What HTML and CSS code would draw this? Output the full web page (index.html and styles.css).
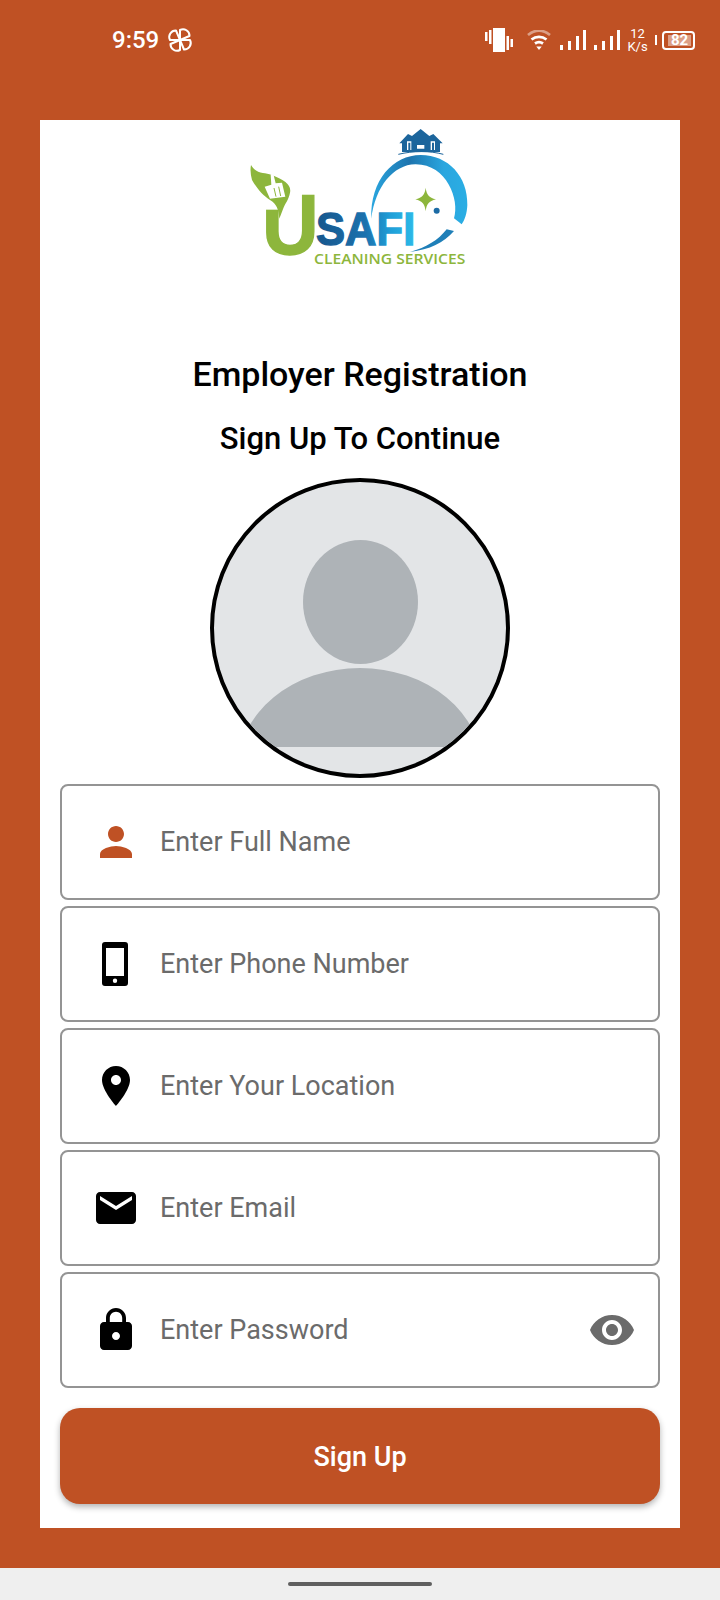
FILE: index.html
```html
<!DOCTYPE html>
<html lang="en">
<head>
  <meta charset="UTF-8">
  <title>Employer Registration</title>
  <link rel="stylesheet" href="styles.css">
</head>
<body>
  <div class="status-bar">
    <div class="status-left">
      <span class="time">9:59</span>
      <svg class="pinwheel" viewBox="-14 -14 28 28" fill="none" stroke="#fff" stroke-width="2" stroke-linejoin="round">
        <path d="M0 0V-10A6.500 6.500 0 0 1 9.500-4Z"/>
        <path d="M0 0V-10A6.500 6.500 0 0 1 9.500-4Z" transform="rotate(90)"/>
        <path d="M0 0V-10A6.500 6.500 0 0 1 9.500-4Z" transform="rotate(180)"/>
        <path d="M0 0V-10A6.500 6.500 0 0 1 9.500-4Z" transform="rotate(270)"/>
      </svg>
    </div>
    <div class="status-right">
      <svg class="st-vibrate" viewBox="0 0 28 24" fill="#fff">
        <rect x="8" y="0" width="12" height="24"/>
        <rect x="0" y="4" width="2.500" height="9"/>
        <rect x="4" y="2" width="2.500" height="14"/>
        <rect x="21.500" y="8" width="2.500" height="14"/>
        <rect x="25.500" y="11" width="2.500" height="8"/>
      </svg>
      <svg class="st-wifi" viewBox="0 0 24 20" fill="none" stroke="#fff" stroke-width="2.800">
        <path d="M1 5C8-.5 16-.5 23 5" opacity=".45"/>
        <path d="M4.500 9.500C9 6 15 6 19.500 9.500"/>
        <path d="M8 13.500C10.500 11.800 13.500 11.800 16 13.500"/>
        <path d="M9.300 16.500H14.700L12 20Z" fill="#fff" stroke="none"/>
      </svg>
      <svg class="st-signal" viewBox="0 0 26 20" fill="#fff">
        <rect x="0" y="15" width="3" height="5"/>
        <rect x="8" y="11" width="3" height="9"/>
        <rect x="16" y="6" width="3" height="14"/>
        <rect x="23" y="0" width="3" height="20"/>
      </svg>
      <svg class="st-signal" viewBox="0 0 26 20" fill="#fff">
        <rect x="0" y="15" width="3" height="5"/>
        <rect x="8" y="11" width="3" height="9"/>
        <rect x="16" y="6" width="3" height="14"/>
        <rect x="23" y="0" width="3" height="20"/>
      </svg>
      <div class="speed"><span>12</span><span>K/s</span></div>
      <div class="battery">
        <span class="battery-nub"></span>
        <span class="battery-body"><span class="battery-level">82</span></span>
      </div>
    </div>
  </div>

  <main class="card">
    <svg class="logo" viewBox="0 0 780 480">
      <defs>
        <linearGradient id="safi" x1="0" x2="1" y1="0" y2="0">
          <stop offset="0" stop-color="#17568c"/>
          <stop offset=".5" stop-color="#1b72ae"/>
          <stop offset=".75" stop-color="#1f9fd8"/>
          <stop offset="1" stop-color="#2cbbe9"/>
        </linearGradient>
        <linearGradient id="ring" x1="0" x2="1" y1="0" y2="0">
          <stop offset="0" stop-color="#2aa6df"/>
          <stop offset=".4" stop-color="#1d74ae"/>
          <stop offset=".75" stop-color="#2aa6df"/>
          <stop offset="1" stop-color="#2aaee4"/>
        </linearGradient>
      </defs>
      <text class="logo-u" x="96" y="402" textLength="170" lengthAdjust="spacingAndGlyphs">U</text>
      <rect x="100" y="215" width="66" height="54" fill="#fff"/>
      <path d="M63 135C80 165 105 155 125 165C165 180 185 195 180 218C176 240 165 250 158 270L148 296C146 268 140 252 120 240C100 228 80 205 66 180C62 165 60 150 63 135Z" fill="#8db63c"/>
      <path d="M130 162L137 190L156 188L166 230L120 236L104 200L124 194L122 164Z" fill="#fff"/>
      <path d="M132 204L138 230M146 200L152 228" stroke="#8db63c" stroke-width="3"/>
      <text class="logo-safi" x="258" y="375" textLength="298" lengthAdjust="spacingAndGlyphs" fill="url(#safi)" stroke="url(#safi)">SAFI</text>
      <path d="M424 296C420 180 490 105 572 105C655 105 714 170 712 255C711 280 704 300 695 313L672 295C690 240 650 132 556 133C490 134 436 200 424 296Z" fill="url(#ring)"/>
      <path d="M672 333C640 370 600 388 540 396C590 382 625 360 650 328Z" fill="#1f7fb8"/>
      <path d="M572 27L598 48L610 42L638 70H630V96H516V70H508L534 42L546 48Z" fill="#1c659c"/>
      <path d="M505 103C550 92 600 92 640 103" fill="none" stroke="#1c659c" stroke-width="3"/>
      <path d="M531 64H544V90H531ZM561 75H583V86H561ZM602 64H615V90H602Z" fill="#fff"/>
      <path d="M535 68H541V90H535ZM606 68H612V90H606Z" fill="#1c659c"/>
      <path d="M587 203C590 224 596 232 618 238C596 244 590 252 587 274C584 252 578 244 556 238C578 232 584 224 587 203Z" fill="#8db63c"/>
      <circle cx="620" cy="272" r="9" fill="#1c6ba5"/>
      <text class="logo-sub" x="252" y="432" textLength="454" lengthAdjust="spacingAndGlyphs">CLEANING SERVICES</text>
    </svg>

    <h1 class="title">Employer Registration</h1>
    <h2 class="subtitle">Sign Up To Continue</h2>

    <svg class="avatar" viewBox="0 0 300 300">
      <defs>
        <clipPath id="avatar-clip"><circle cx="150" cy="150" r="146"/></clipPath>
      </defs>
      <circle cx="150" cy="150" r="148" fill="#e3e5e7" stroke="#000" stroke-width="4"/>
      <ellipse cx="150.500" cy="124" rx="57.500" ry="62" fill="#aeb3b7"/>
      <g clip-path="url(#avatar-clip)">
        <path d="M28 269V290A122 100 0 0 1 272 290V269Z" fill="#aeb3b7"/>
      </g>
    </svg>

    <form class="fields">
      <div class="field">
        <svg class="icon icon-accent" viewBox="0 0 24 24"><path d="M12 12c2.210 0 4-1.790 4-4s-1.790-4-4-4-4 1.790-4 4 1.790 4 4 4zm0 2c-2.670 0-8 1.340-8 4v2h16v-2c0-2.660-5.330-4-8-4z"/></svg>
        <span class="placeholder">Enter Full Name</span>
      </div>
      <div class="field">
        <svg class="icon" viewBox="0 0 24 24"><path fill-rule="evenodd" d="M6.500 1h10A1.500 1.500 0 0 1 18 2.500v19a1.500 1.500 0 0 1-1.500 1.500h-10A1.500 1.500 0 0 1 5 21.500v-19A1.500 1.500 0 0 1 6.500 1zM7 4v14h9V4zm4.500 15.300a1.100 1.100 0 1 0 0 2.200 1.100 1.100 0 0 0 0-2.200z"/></svg>
        <span class="placeholder">Enter Phone Number</span>
      </div>
      <div class="field">
        <svg class="icon" viewBox="0 0 24 24"><path d="M12 2C8.130 2 5 5.130 5 9c0 5.250 7 13 7 13s7-7.750 7-13c0-3.870-3.130-7-7-7zm0 9.500c-1.380 0-2.500-1.120-2.500-2.500s1.120-2.500 2.500-2.500 2.500 1.120 2.500 2.500-1.120 2.500-2.500 2.500z"/></svg>
        <span class="placeholder">Enter Your Location</span>
      </div>
      <div class="field">
        <svg class="icon" viewBox="0 0 24 24"><path d="M20 4H4c-1.100 0-1.990.9-1.990 2L2 18c0 1.100.9 2 2 2h16c1.100 0 2-.9 2-2V6c0-1.100-.9-2-2-2zm0 4l-8 5-8-5V6l8 5 8-5v2z"/></svg>
        <span class="placeholder">Enter Email</span>
      </div>
      <div class="field">
        <svg class="icon" viewBox="0 0 24 24"><path d="M18 8h-1V6c0-2.760-2.240-5-5-5S7 3.240 7 6v2H6c-1.100 0-2 .9-2 2v10c0 1.100.9 2 2 2h12c1.100 0 2-.9 2-2V10c0-1.100-.9-2-2-2zm-6 9c-1.100 0-2-.9-2-2s.9-2 2-2 2 .9 2 2-.9 2-2 2zm3.100-9H8.900V6c0-1.710 1.390-3.100 3.100-3.100 1.710 0 3.100 1.390 3.100 3.100v2z"/></svg>
        <span class="placeholder">Enter Password</span>
        <svg class="icon icon-eye" viewBox="0 0 24 24"><path d="M12 4.500C7 4.500 2.730 7.610 1 12c1.730 4.390 6 7.500 11 7.500s9.270-3.110 11-7.500c-1.730-4.390-6-7.500-11-7.500zM12 17c-2.760 0-5-2.240-5-5s2.240-5 5-5 5 2.240 5 5-2.240 5-5 5zm0-8c-1.660 0-3 1.340-3 3s1.340 3 3 3 3-1.340 3-3-1.340-3-3-3z"/></svg>
      </div>
      <button class="signup" type="button">Sign Up</button>
    </form>
  </main>

  <div class="nav-bar"><span class="nav-pill"></span></div>
</body>
</html>
```

FILE: styles.css
```css
* {
  box-sizing: border-box;
}
body {
  margin: 0;
  width: 720px;
  height: 1600px;
  background-color: #bf5124;
  font-family: Roboto, sans-serif;
  display: flex;
  flex-direction: column;
}
.status-bar {
  height: 80px;
  padding: 0 25px 0 112px;
  display: flex;
  align-items: center;
  justify-content: space-between;
  color: #fff;
}
.status-left {
  display: flex;
  align-items: center;
  gap: 7px;
}
.time {
  font-size: 24px;
  font-weight: 500;
}
.pinwheel {
  width: 28px;
  height: 28px;
}
.status-right {
  display: flex;
  align-items: center;
}
.st-vibrate {
  width: 28px;
  height: 24px;
  margin-right: 14px;
}
.st-wifi {
  width: 24px;
  height: 20px;
  margin-right: 9px;
}
.st-signal {
  width: 26px;
  height: 20px;
  margin-right: 8px;
}
.speed {
  width: 21px;
  margin: 0 7px 0 -1px;
  display: flex;
  flex-direction: column;
  align-items: center;
  font-size: 13px;
  line-height: 13px;
}
.battery {
  display: flex;
  align-items: center;
  gap: 5px;
}
.battery-nub {
  width: 2px;
  height: 10px;
  background-color: #fff;
}
.battery-body {
  width: 33px;
  height: 19px;
  border: 2px solid #fff;
  border-radius: 4px;
  padding: 2px;
  display: flex;
}
.battery-level {
  width: 24px;
  margin-left: 2px;
  background-color: rgba(255, 255, 255, 0.45);
  color: #fff;
  font-size: 15px;
  font-weight: 700;
  line-height: 11px;
  text-align: center;
}
.card {
  margin: 40px 40px 0;
  height: 1408px;
  padding: 0 20px;
  background-color: #fff;
  display: flex;
  flex-direction: column;
  align-items: center;
}
.logo {
  width: 260px;
  height: 160px;
  flex-shrink: 0;
}
.logo-u {
  font-family: "Liberation Sans", sans-serif;
  font-size: 255px;
  font-weight: 700;
  fill: #8db63c;
  stroke: #8db63c;
  stroke-width: 4px;
}
.logo-safi {
  font-family: "Liberation Sans", sans-serif;
  font-size: 139px;
  font-weight: 700;
  stroke-width: 4px;
}
.logo-sub {
  font-family: "Open Sans", sans-serif;
  font-size: 42px;
  font-weight: 600;
  fill: #8db63c;
}
.title {
  margin: 74px 0 0;
  font-size: 34px;
  line-height: 40px;
  font-weight: 500;
  color: #000;
}
.subtitle {
  margin: 27px 0 0;
  font-size: 31px;
  line-height: 36px;
  font-weight: 500;
  color: #000;
}
.avatar {
  width: 300px;
  height: 300px;
  margin-top: 21px;
  flex-shrink: 0;
}
.fields {
  width: 100%;
  margin-top: 6px;
  display: flex;
  flex-direction: column;
  gap: 6px;
}
.field {
  height: 116px;
  padding: 0 22px 0 30px;
  border: 2px solid #949494;
  border-radius: 8px;
  display: flex;
  align-items: center;
  gap: 20px;
}
.icon {
  width: 48px;
  height: 48px;
  flex-shrink: 0;
  fill: #000;
}
.icon-accent {
  fill: #bf5124;
}
.icon-eye {
  margin-left: auto;
  fill: #6b6b6b;
}
.placeholder {
  font-size: 27px;
  color: #6b6b6b;
}
.signup {
  height: 96px;
  margin-top: 14px;
  padding-top: 2px;
  border: none;
  border-radius: 20px;
  background-color: #bf5124;
  color: #fff;
  font-family: Roboto, sans-serif;
  font-size: 27px;
  font-weight: 500;
  box-shadow: 0 3px 6px rgba(0, 0, 0, 0.3);
}
.nav-bar {
  margin-top: auto;
  height: 32px;
  background-color: #efefef;
  display: flex;
  align-items: center;
  justify-content: center;
}
.nav-pill {
  width: 144px;
  height: 4px;
  border-radius: 2px;
  background-color: #5f5f5f;
}
```
